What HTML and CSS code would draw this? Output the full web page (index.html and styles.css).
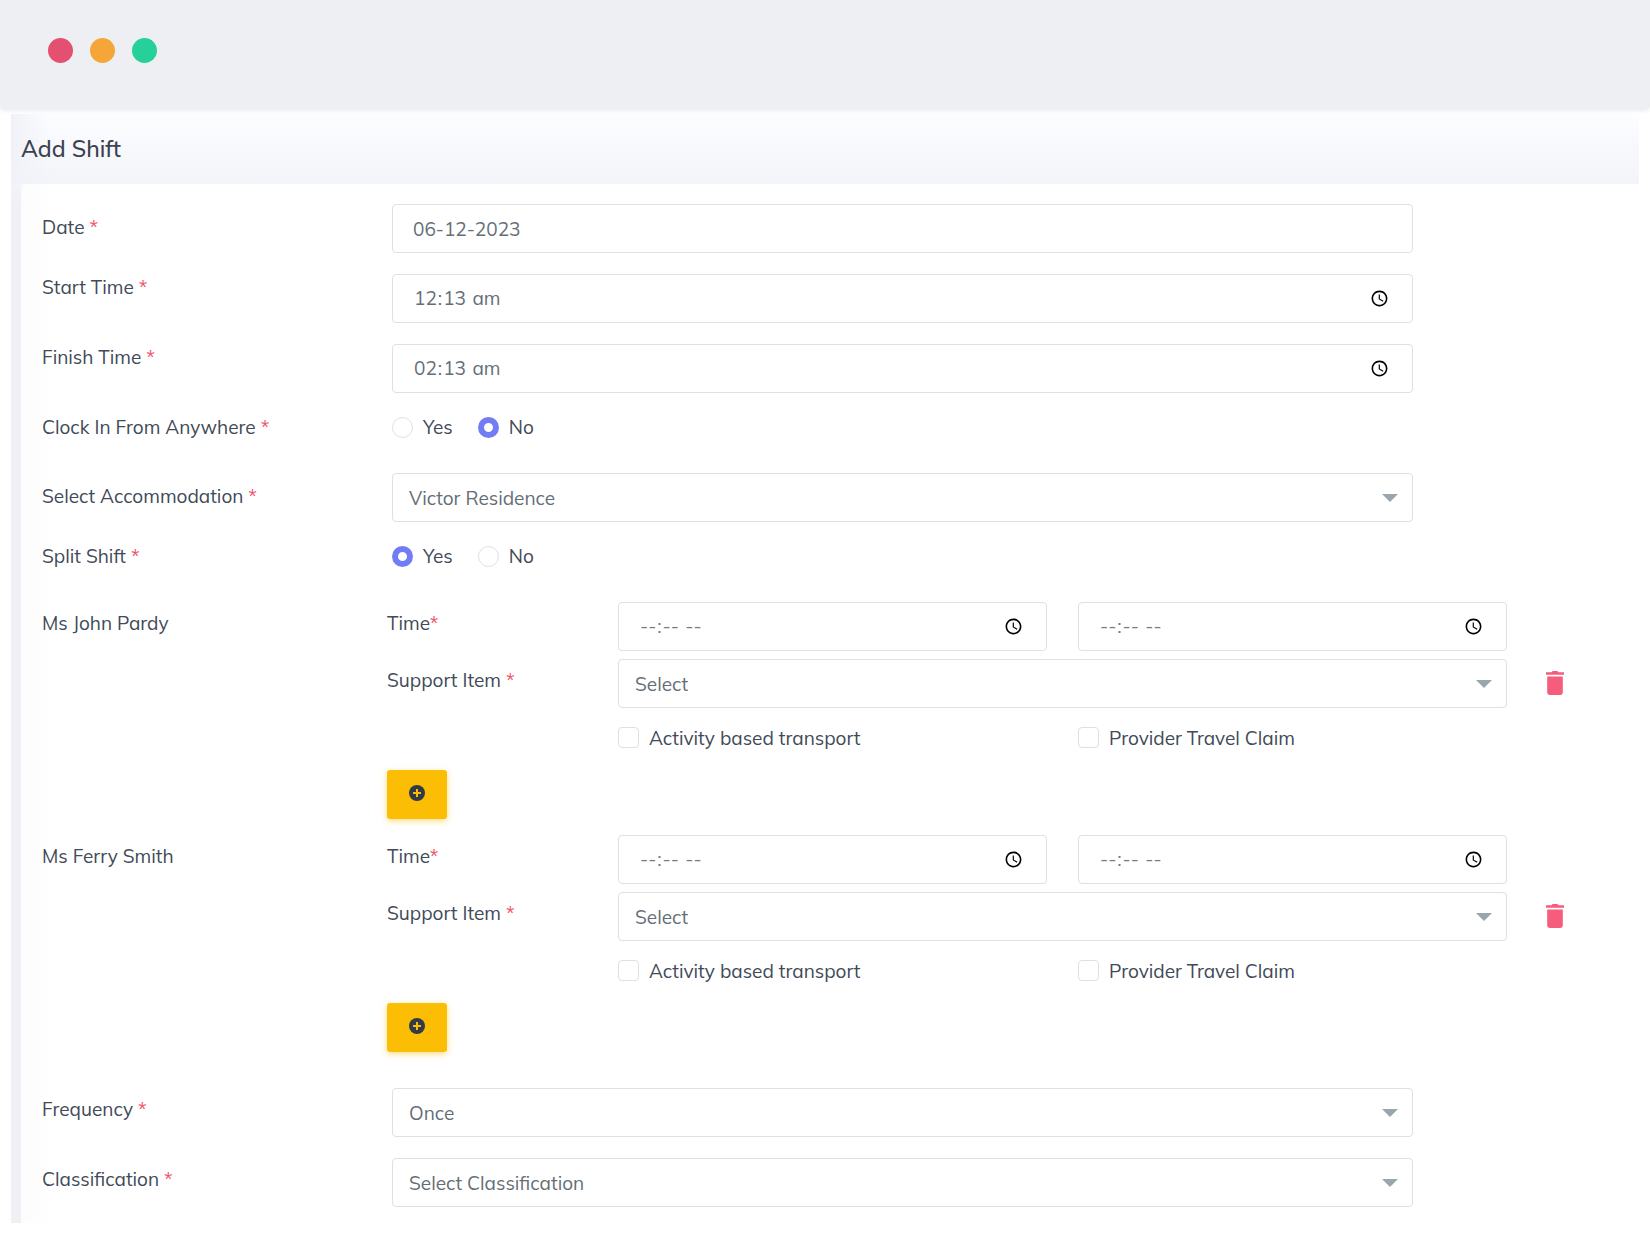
FILE: index.html
```html
<!DOCTYPE html>
<html lang="en">
<head>
<meta charset="UTF-8">
<meta name="viewport" content="width=device-width, initial-scale=1.0">
<title>Add Shift</title>
<link rel="stylesheet" href="styles.css">
</head>
<body>

<header class="window-bar">
    <span class="dot dot-red"></span>
    <span class="dot dot-orange"></span>
    <span class="dot dot-green"></span>
</header>

<main class="page">
    <h1>Add Shift</h1>

    <form class="card">
        <div class="form-row">
            <label class="row-label middle" for="date">Date <span class="required">*</span></label>
            <input class="control" type="text" id="date" name="date" value="06-12-2023">
        </div>
        <div class="form-row">
            <label class="row-label" for="start-time">Start Time <span class="required">*</span></label>
            <input class="control" type="time" id="start-time" name="start_time" value="00:13">
        </div>
        <div class="form-row">
            <label class="row-label" for="finish-time">Finish Time <span class="required">*</span></label>
            <input class="control" type="time" id="finish-time" name="finish_time" value="02:13">
        </div>
        <div class="form-row" role="radiogroup" aria-labelledby="clock-in-label">
            <span class="row-label" id="clock-in-label">Clock In From Anywhere <span class="required">*</span></span>
            <div class="radios">
                <label class="choice"><input type="radio" name="clock_in" value="yes">Yes</label>
                <label class="choice"><input type="radio" name="clock_in" value="no" checked>No</label>
            </div>
        </div>
        <div class="form-row">
            <label class="row-label middle" for="accommodation">Select Accommodation <span class="required">*</span></label>
            <div class="select-box">
                <select class="control" id="accommodation" name="accommodation">
                    <option>Victor Residence</option>
                </select>
            </div>
        </div>
        <div class="form-row" role="radiogroup" aria-labelledby="split-label">
            <span class="row-label" id="split-label">Split Shift <span class="required">*</span></span>
            <div class="radios">
                <label class="choice"><input type="radio" name="split" value="yes" checked>Yes</label>
                <label class="choice"><input type="radio" name="split" value="no">No</label>
            </div>
        </div>

        <div class="clients">
            <section class="client">
                <span class="client-name">Ms John Pardy</span>
                <label class="field-label" for="from-1">Time<span class="required">*</span></label>
                <div class="pair">
                    <input class="control empty" type="time" id="from-1" name="from_1">
                    <input class="control empty" type="time" name="to_1" aria-label="Finish time">
                </div>
                <label class="field-label item-label" for="item-1">Support Item <span class="required">*</span></label>
                <div class="select-box">
                    <select class="control" id="item-1" name="item_1">
                        <option>Select</option>
                    </select>
                </div>
                <button class="delete" type="button" aria-label="Delete">
                    <svg viewBox="0 0 18 24" width="18" height="24"><path d="M5.5 1.2 6.6 0h4.8l1.1 1.2H18v2.6H0V1.2zM1.2 5.4h15.6v16.1a2.4 2.4 0 0 1-2.4 2.4H3.6a2.4 2.4 0 0 1-2.4-2.4z"/></svg>
                </button>
                <div class="pair checks">
                    <label class="choice"><input type="checkbox" name="transport_1">Activity based transport</label>
                    <label class="choice"><input type="checkbox" name="travel_1">Provider Travel Claim</label>
                </div>
                <button class="add" type="button" aria-label="Add">
                    <svg viewBox="0 0 16 16" width="16" height="16"><circle cx="8" cy="8" r="8"/><path d="M8 4v8M4 8h8"/></svg>
                </button>
            </section>

            <section class="client">
                <span class="client-name">Ms Ferry Smith</span>
                <label class="field-label" for="from-2">Time<span class="required">*</span></label>
                <div class="pair">
                    <input class="control empty" type="time" id="from-2" name="from_2">
                    <input class="control empty" type="time" name="to_2" aria-label="Finish time">
                </div>
                <label class="field-label item-label" for="item-2">Support Item <span class="required">*</span></label>
                <div class="select-box">
                    <select class="control" id="item-2" name="item_2">
                        <option>Select</option>
                    </select>
                </div>
                <button class="delete" type="button" aria-label="Delete">
                    <svg viewBox="0 0 18 24" width="18" height="24"><path d="M5.5 1.2 6.6 0h4.8l1.1 1.2H18v2.6H0V1.2zM1.2 5.4h15.6v16.1a2.4 2.4 0 0 1-2.4 2.4H3.6a2.4 2.4 0 0 1-2.4-2.4z"/></svg>
                </button>
                <div class="pair checks">
                    <label class="choice"><input type="checkbox" name="transport_2">Activity based transport</label>
                    <label class="choice"><input type="checkbox" name="travel_2">Provider Travel Claim</label>
                </div>
                <button class="add" type="button" aria-label="Add">
                    <svg viewBox="0 0 16 16" width="16" height="16"><circle cx="8" cy="8" r="8"/><path d="M8 4v8M4 8h8"/></svg>
                </button>
            </section>
        </div>

        <div class="form-row">
            <label class="row-label low" for="frequency">Frequency <span class="required">*</span></label>
            <div class="select-box">
                <select class="control" id="frequency" name="frequency">
                    <option>Once</option>
                </select>
            </div>
        </div>
        <div class="form-row">
            <label class="row-label low" for="classification">Classification <span class="required">*</span></label>
            <div class="select-box">
                <select class="control" id="classification" name="classification">
                    <option>Select Classification</option>
                </select>
            </div>
        </div>
    </form>
</main>

</body>
</html>
```

FILE: styles.css
```css
* {
    box-sizing: border-box;
}

body {
    margin: 0;
    background-color: #fff;
    color: #414a58;
    font-family: Muli, Mulish, Lato, sans-serif;
    font-size: 19px;
    line-height: 26px;
}

.window-bar {
    display: flex;
    align-items: center;
    gap: 17px;
    height: 110px;
    padding: 0 48px 9px;
    background-color: #eeeff3;
    border-radius: 0 0 5px 5px;
    box-shadow: 0 1px 4px rgba(0, 0, 0, 0.08);
}

.dot {
    width: 25px;
    height: 25px;
    border-radius: 50%;
}

.dot-red {
    background-color: #e35070;
}

.dot-orange {
    background-color: #f5a638;
}

.dot-green {
    background-color: #25d198;
}

.page {
    margin: 4px 11px 22px;
    padding-left: 10px;
    background: linear-gradient(to right, #f1f2f7, transparent 40px) 0 0 / 100% 70px no-repeat,
                linear-gradient(#fcfdff, #f3f4f9 70px, #f0f1f6 90px);
}

h1 {
    margin: 0;
    height: 70px;
    padding-top: 19px;
    font-size: 23px;
    font-weight: 500;
    line-height: 32px;
    color: #3a4250;
}

.card {
    padding: 20px 21px 16px;
    background: linear-gradient(to right, #fcfcfd, #fff 32px);
    border-radius: 4px 0 0 0;
}

.form-row {
    display: grid;
    grid-template-columns: 350px 1fr;
    padding-right: 13%;
    margin-bottom: 21px;
}

.form-row:last-child {
    margin-bottom: 0;
}

.row-label.middle {
    padding-top: 10px;
}

.row-label.low,
.field-label,
.client-name {
    padding-top: 8px;
}

.required {
    color: #f1556c;
}

.control {
    display: block;
    width: 100%;
    height: 49px;
    padding: 0 20px;
    background-color: #fff;
    border: 1px solid #dee0e6;
    border-radius: 4px;
    color: #656e77;
    font: inherit;
}

.control::-webkit-datetime-edit {
    padding-bottom: 2px;
}

.control::-webkit-datetime-edit-ampm-field {
    margin-left: 2px;
    text-transform: lowercase;
}

.control::-webkit-calendar-picker-indicator {
    width: 19px;
    height: 19px;
}

.control.empty {
    color: #777d85;
}

.select-box {
    position: relative;
}

.select-box::after {
    content: "";
    position: absolute;
    top: 21px;
    right: 15px;
    border: 8px solid transparent;
    border-top-color: #98a6ad;
    border-bottom: 0;
    pointer-events: none;
}

select.control {
    appearance: none;
    padding: 0 16px;
}

.radios {
    display: flex;
    gap: 25px;
    height: 38px;
}

.choice {
    display: flex;
    align-items: center;
    gap: 10px;
    height: 26px;
}

.choice input {
    appearance: none;
    width: 21px;
    height: 21px;
    margin: 0;
    background-color: #fff;
    border: 1px solid #dee0e6;
    border-radius: 4px;
}

.choice input[type="radio"] {
    border-radius: 50%;
}

.choice input[type="radio"]:checked {
    border: 6px solid #727cf5;
}

.choice input[type="checkbox"]:checked {
    background-color: #727cf5;
}

.clients {
    padding-bottom: 36px;
}

.client {
    display: grid;
    grid-template-columns: 345px 231px 1fr 111px;
    row-gap: 8px;
    margin-bottom: 16px;
}

.client:last-child {
    margin-bottom: 0;
}

/* first column belongs to the client name */
.item-label,
.add {
    grid-column: 2;
}

.pair {
    display: grid;
    grid-template-columns: 1fr 1fr;
    column-gap: 31px;
}

.checks {
    grid-column: 3;
    align-items: center;
    height: 46px;
    padding-bottom: 3px;
}

.delete {
    justify-self: start;
    align-self: start;
    display: flex;
    margin-left: 39px;
    padding: 12px 0;
    background: none;
    border: none;
    cursor: pointer;
}

.delete svg {
    fill: #f65c7c;
}

.add {
    display: flex;
    justify-content: center;
    width: 60px;
    height: 49px;
    padding: 15px 0 0;
    background-color: #fcbe05;
    border: none;
    border-radius: 3px;
    box-shadow: 0 2px 6px rgba(252, 190, 5, 0.5);
    cursor: pointer;
}

.add circle {
    fill: #313a46;
}

.add path {
    stroke: #fcbe05;
    stroke-width: 2;
}
```
